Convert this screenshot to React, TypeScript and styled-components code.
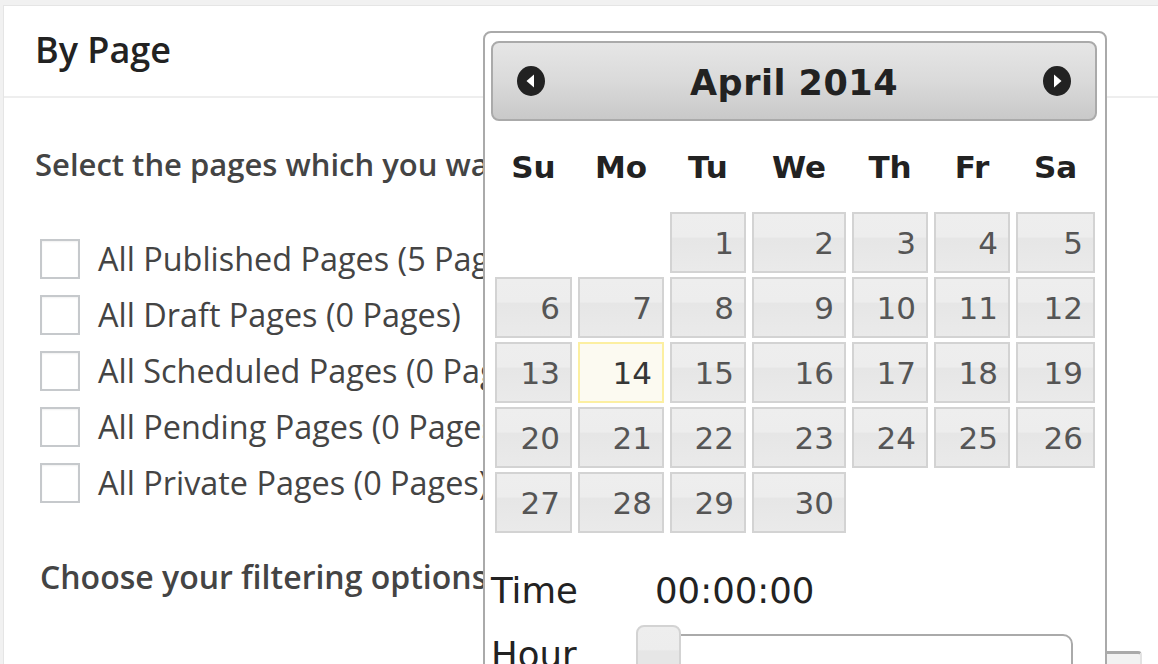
import styled, { createGlobalStyle } from "styled-components";

const GlobalStyle = createGlobalStyle`
  html, body {
    margin: 0;
    padding: 0;
    background: #f1f1f1;
    overflow: hidden;
  }
  * {
    box-sizing: border-box;
  }
`;

const Page = styled.div`
  position: relative;
  width: 1158px;
  height: 664px;
  overflow: hidden;
  padding: 5px 0 0 3px;
  font-family: "Open Sans", "Liberation Sans", sans-serif;
  color: #444;
`;

const Panel = styled.section`
  height: 100%;
  background: #fff;
  border-top: 1px solid #e5e5e5;
  border-left: 1px solid #e5e5e5;
`;

const PanelHeader = styled.header`
  display: flex;
  align-items: center;
  height: 92px;
  padding-left: 31px;
  border-bottom: 2px solid #eeeeee;
`;

const PanelTitle = styled.h3`
  margin: 0 0 4px;
  font-size: 36px;
  font-weight: 600;
  color: #222;
`;

const PanelBody = styled.div`
  padding: 44px 31px 0;
`;

const Intro = styled.p`
  margin: 0;
  font-size: 31px;
  font-weight: 600;
  line-height: 44px;
  white-space: nowrap;
`;

const OptionList = styled.ul`
  list-style: none;
  margin: 53px 0 0 5px;
  padding: 0;
  display: flex;
  flex-direction: column;
  gap: 16px;
`;

const Option = styled.li`
  display: flex;
  align-items: center;
  gap: 18px;
  height: 40px;
`;

const Checkbox = styled.span`
  width: 40px;
  height: 40px;
  flex: none;
  border: 2px solid #c6c9cc;
  background: #fff;
  box-shadow: inset 0 1px 2px rgba(0, 0, 0, 0.06);
`;

const OptionLabel = styled.span`
  font-size: 32.4px;
  white-space: nowrap;
  margin-top: -3px;
`;

const FilterHeading = styled.p`
  margin: 52px 0 0 5px;
  font-size: 32px;
  font-weight: 600;
  line-height: 44px;
  white-space: nowrap;
`;

const FilterRow = styled.div`
  display: flex;
  justify-content: flex-end;
  margin: 52px -15px 0 0;
`;

const FilterBox = styled.div`
  width: 420px;
  height: 30px;
  border-top: 3px solid #aaa;
  border-right: 2px solid #e2e2e2;
  border-radius: 0 4px 0 0;
  background: #f2f2f2;
`;

/* datepicker overlay */

const Picker = styled.div`
  position: absolute;
  left: 483px;
  top: 31px;
  width: 624px;
  height: 680px;
  padding: 8px 8px 0 6px;
  background: #fff;
  border: 2px solid #aaa;
  border-radius: 8px;
  font-family: "DejaVu Sans", "Liberation Sans", sans-serif;
  color: #222;
`;

const PickerHeader = styled.div`
  display: flex;
  align-items: center;
  justify-content: space-between;
  height: 80px;
  padding: 0 22px;
  border: 2px solid #aaa;
  border-radius: 8px;
  background: linear-gradient(to bottom, #e6e6e6 0%, #dadada 50%, #c9c9c9 100%);
`;

const MonthTitle = styled.div`
  font-size: 35px;
  font-weight: bold;
  color: #222;
  letter-spacing: 0.5px;
  margin-top: 3px;
`;

const NavButton = styled.span`
  display: flex;
  width: 32px;
  height: 32px;
`;

const Grid = styled.div`
  display: grid;
  grid-template-columns: 77px 86px 76px 94px 76px 76px 79px;
  column-gap: 6px;
  row-gap: 4px;
  padding-left: 4px;
`;

const DayName = styled.div`
  height: 87px;
  padding-top: 4px;
  display: flex;
  align-items: center;
  justify-content: center;
  font-size: 31px;
  font-weight: bold;
  color: #222;
`;

const DayCell = styled.div<{ $today?: boolean }>`
  height: 61px;
  display: flex;
  align-items: center;
  justify-content: flex-end;
  padding-right: 10px;
  font-size: 31px;
  color: ${({ $today }) => ($today ? "#363636" : "#555")};
  border: 2px solid ${({ $today }) => ($today ? "#fcefa1" : "#d3d3d3")};
  background: ${({ $today }) =>
    $today
      ? "#fcfaf1"
      : "linear-gradient(to bottom, #eeeeee 0%, #ededed 40%, #e6e6e6 43%, #eaeaea 100%)"};
`;

const EmptyCell = styled.div`
  height: 61px;
`;

const TimeRow = styled.div`
  display: grid;
  grid-template-columns: 145px 1fr;
  align-items: center;
  margin-top: 32px;
  height: 50px;
`;

const TimeLabel = styled.div`
  font-size: 35.5px;
  color: #222;
`;

const TimeValue = styled.div`
  padding-left: 19px;
  font-size: 35.5px;
  color: #222;
`;

const SliderRow = styled.div`
  display: grid;
  grid-template-columns: 145px 437px;
  align-items: start;
  margin-top: 9px;
`;

const Track = styled.div`
  position: relative;
  height: 60px;
  margin-top: 10px;
  border: 2px solid #aaa;
  border-radius: 10px;
  background: #fff;
`;

const Handle = styled.span`
  position: absolute;
  left: -2px;
  top: -11px;
  width: 45px;
  height: 60px;
  border: 2px solid #d3d3d3;
  border-radius: 8px;
  background: linear-gradient(to bottom, #eeeeee 0%, #ededed 40%, #e6e6e6 43%, #e6e6e6 100%);
`;

const HourLabel = styled.div`
  font-size: 35.5px;
  color: #222;
  padding-top: 10px;
`;

const NavIcon = ({ dir }: { dir: "prev" | "next" }) => (
  <svg width="32" height="32" viewBox="0 0 32 32">
    <ellipse cx="16" cy="16" rx="14" ry="15" fill="#222" />
    {dir === "prev" ? (
      <polygon points="19,9.5 19,22.5 11.5,16" fill="#fff" />
    ) : (
      <polygon points="13,9.5 13,22.5 20.5,16" fill="#fff" />
    )}
  </svg>
);

const options = [
  "All Published Pages (5 Pages)",
  "All Draft Pages (0 Pages)",
  "All Scheduled Pages (0 Pages)",
  "All Pending Pages (0 Pages)",
  "All Private Pages (0 Pages)",
];

const dayNames = ["Su", "Mo", "Tu", "We", "Th", "Fr", "Sa"];
const firstWeekday = 2;
const daysInMonth = 30;
const today = 14;

const App = () => {
  const cells: (number | null)[] = [];
  for (let i = 0; i < firstWeekday; i++) cells.push(null);
  for (let d = 1; d <= daysInMonth; d++) cells.push(d);

  return (
    <>
      <GlobalStyle />
      <Page>
        <Panel>
          <PanelHeader>
            <PanelTitle>By Page</PanelTitle>
          </PanelHeader>
          <PanelBody>
            <Intro>Select the pages which you want to include:</Intro>
            <OptionList>
              {options.map((label) => (
                <Option key={label}>
                  <Checkbox />
                  <OptionLabel>{label}</OptionLabel>
                </Option>
              ))}
            </OptionList>
            <FilterHeading>Choose your filtering options:</FilterHeading>
            <FilterRow>
              <FilterBox />
            </FilterRow>
          </PanelBody>
        </Panel>

        <Picker>
          <PickerHeader>
            <NavButton>
              <NavIcon dir="prev" />
            </NavButton>
            <MonthTitle>April 2014</MonthTitle>
            <NavButton>
              <NavIcon dir="next" />
            </NavButton>
          </PickerHeader>
          <Grid>
            {dayNames.map((n) => (
              <DayName key={n}>{n}</DayName>
            ))}
            {cells.map((d, i) =>
              d === null ? (
                <EmptyCell key={`e${i}`} />
              ) : (
                <DayCell key={d} $today={d === today}>
                  {d}
                </DayCell>
              )
            )}
          </Grid>
          <TimeRow>
            <TimeLabel>Time</TimeLabel>
            <TimeValue>00:00:00</TimeValue>
          </TimeRow>
          <SliderRow>
            <HourLabel>Hour</HourLabel>
            <Track>
              <Handle />
            </Track>
          </SliderRow>
        </Picker>
      </Page>
    </>
  );
};

export default App;
